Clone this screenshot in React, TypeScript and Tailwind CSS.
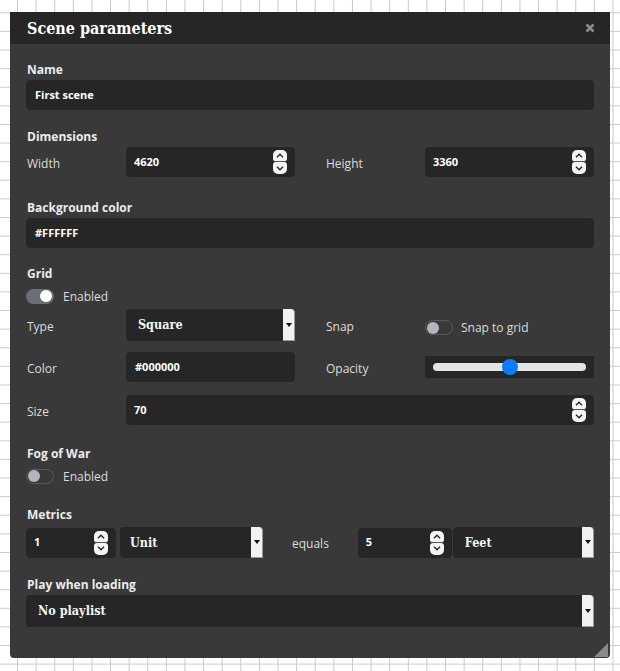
import React from "react";

function Spinner() {
  return (
    <div className="flex flex-col">
      <div className="w-[14px] h-[12px] bg-[#f4f4f4] rounded-t-[5px] rounded-b-[3px] flex items-center justify-center border-b border-[#555]">
        <svg width="8" height="5" viewBox="0 0 8 5">
          <path d="M1 4.2 L4 1.2 L7 4.2" stroke="#222" strokeWidth="1.3" fill="none" />
        </svg>
      </div>
      <div className="w-[14px] h-[12px] bg-[#f4f4f4] rounded-b-[5px] rounded-t-[3px] flex items-center justify-center">
        <svg width="8" height="5" viewBox="0 0 8 5">
          <path d="M1 0.8 L4 3.8 L7 0.8" stroke="#222" strokeWidth="1.3" fill="none" />
        </svg>
      </div>
    </div>
  );
}

function NumberInput({ value, className = "" }: { value: string; className?: string }) {
  return (
    <div className={`flex items-center h-[30px] bg-[#262626] rounded-[4px] pl-[8px] pr-[8px] ${className}`}>
      <span className="text-[11px] font-bold text-white font-['Open_Sans',sans-serif]">{value}</span>
      <div className="ml-auto">
        <Spinner />
      </div>
    </div>
  );
}

function TextInput({ value, className = "" }: { value: string; className?: string }) {
  return (
    <div className={`flex items-center h-[30px] bg-[#262626] rounded-[4px] pl-[9px] ${className}`}>
      <span className="text-[11px] font-bold text-white font-['Open_Sans',sans-serif]">{value}</span>
    </div>
  );
}

function Select({
  value,
  className = "",
  pl = "pl-[12px]",
}: {
  value: string;
  className?: string;
  pl?: string;
}) {
  return (
    <div className={`flex items-stretch bg-[#262626] rounded-[4px] ${className}`}>
      <span
        className={`flex-1 flex items-center ${pl} pt-[1px] text-[12.5px] font-bold text-[#f4f4f4] font-['DejaVu_Serif',serif] font-stretch-condensed`}
      >
        {value}
      </span>
      <div className="w-[12px] bg-[#f2f2f2] border-r border-b border-[#9a9a9a] rounded-tr-[4px] flex items-center justify-center">
        <svg width="6" height="4" viewBox="0 0 6 4">
          <path d="M0 0 H6 L3 4 Z" fill="#111" />
        </svg>
      </div>
    </div>
  );
}

function Toggle({ on }: { on: boolean }) {
  return on ? (
    <div className="w-[28px] h-[15px] rounded-full bg-[#6c6e77] flex items-center justify-end pr-[2px]">
      <div className="w-[12px] h-[12px] rounded-full bg-white" />
    </div>
  ) : (
    <div className="w-[28px] h-[15px] rounded-full border border-[#5a5a5a] flex items-center pl-[1px]">
      <div className="w-[12px] h-[12px] rounded-full bg-[#b3b6bc]" />
    </div>
  );
}

function SectionLabel({ children, className = "" }: { children: React.ReactNode; className?: string }) {
  return (
    <div
      className={`h-[18px] leading-[20px] text-[12px] font-bold text-[#ececec] font-['Open_Sans',sans-serif] pl-[1px] ${className}`}
    >
      {children}
    </div>
  );
}

function RowLabel({ children }: { children: React.ReactNode }) {
  return (
    <div className="w-[100px] shrink-0 pl-[1px] pt-[3px] text-[12px] text-[#dcdcdc] font-['Open_Sans',sans-serif]">
      {children}
    </div>
  );
}

export default function App() {
  return (
    <div className="w-full h-[671px] bg-white bg-[linear-gradient(to_right,#c8c8c8_1px,transparent_1px),linear-gradient(to_bottom,#cccccc_1px,transparent_1px)] bg-[size:18.62px_18.62px] bg-[position:17px_12.3px] pt-[12px] pl-[10px] overflow-hidden">
      <div className="w-[600px] h-[646px] bg-[#393939] rounded-b-[4px] flex flex-col relative">
        <div className="h-[32px] bg-[#262626] flex items-center pl-[17px] pr-[15px] shrink-0">
          <span className="pt-[1px] text-[16px] font-bold text-white font-['DejaVu_Serif',serif] font-stretch-condensed">
            Scene parameters
          </span>
          <svg className="ml-auto" width="10" height="10" viewBox="0 0 10 10">
            <path d="M1.5 1.5 L8.5 8.5 M8.5 1.5 L1.5 8.5" stroke="#8c8c8c" strokeWidth="2.6" strokeLinecap="butt" />
          </svg>
        </div>
        <div className="flex flex-col px-[16px] pt-[16px]">
          <SectionLabel>Name</SectionLabel>
          <TextInput value="First scene" className="mt-[2px]" />

          <SectionLabel className="mt-[17px]">Dimensions</SectionLabel>
          <div className="mt-[2px] flex gap-[30px]">
            <div className="flex-1 flex items-center">
              <RowLabel>Width</RowLabel>
              <NumberInput value="4620" className="flex-1" />
            </div>
            <div className="flex-1 flex items-center">
              <RowLabel>Height</RowLabel>
              <NumberInput value="3360" className="flex-1" />
            </div>
          </div>

          <SectionLabel className="mt-[21px]">Background color</SectionLabel>
          <TextInput value="#FFFFFF" className="mt-[2px]" />

          <SectionLabel className="mt-[16px]">Grid</SectionLabel>
          <div className="mt-[5px] h-[18px] flex items-center gap-[9px]">
            <Toggle on />
            <span className="pt-[1px] text-[12px] text-[#dcdcdc] font-['Open_Sans',sans-serif]">Enabled</span>
          </div>

          <div className="mt-[4px] flex gap-[30px]">
            <div className="flex-1 flex items-center">
              <RowLabel>Type</RowLabel>
              <Select value="Square" className="flex-1 h-[32px]" />
            </div>
            <div className="flex-1 flex items-center">
              <RowLabel>Snap</RowLabel>
              <div className="flex items-center gap-[8px] pt-[5px]">
                <Toggle on={false} />
                <span className="text-[12px] text-[#dcdcdc] font-['Open_Sans',sans-serif]">Snap to grid</span>
              </div>
            </div>
          </div>

          <div className="mt-[11px] flex gap-[30px]">
            <div className="flex-1 flex items-center">
              <RowLabel>Color</RowLabel>
              <TextInput value="#000000" className="flex-1" />
            </div>
            <div className="flex-1 flex items-center">
              <RowLabel>Opacity</RowLabel>
              <div className="flex-1 h-[22px] bg-[#262626] flex items-center px-[8px] relative">
                <div className="w-full h-[8px] rounded-full bg-[#e3e4e6]" />
                <div className="absolute left-[77px] top-[3px] w-[16px] h-[16px] rounded-full bg-[#0b7cff]" />
              </div>
            </div>
          </div>

          <div className="mt-[13px] flex items-center">
            <RowLabel>Size</RowLabel>
            <NumberInput value="70" className="flex-1" />
          </div>

          <SectionLabel className="mt-[19px]">Fog of War</SectionLabel>
          <div className="mt-[5px] h-[18px] flex items-center gap-[9px]">
            <Toggle on={false} />
            <span className="pt-[1px] text-[12px] text-[#dcdcdc] font-['Open_Sans',sans-serif]">Enabled</span>
          </div>

          <SectionLabel className="mt-[20px]">Metrics</SectionLabel>
          <div className="mt-[4px] flex items-center">
            <NumberInput value="1" className="w-[90px]" />
            <Select value="Unit" className="w-[143px] h-[31px] ml-[4px]" pl="pl-[10px]" />
            <span className="ml-[29px] pt-[2px] text-[12px] text-[#dcdcdc] font-['Open_Sans',sans-serif]">equals</span>
            <NumberInput value="5" className="w-[94px] ml-[29px]" />
            <Select value="Feet" className="flex-1 h-[31px] ml-[1px]" />
          </div>

          <SectionLabel className="mt-[17px]">Play when loading</SectionLabel>
          <Select value="No playlist" className="mt-[2px] h-[32px]" />
        </div>
        <svg className="absolute right-[2px] bottom-[1px]" width="14" height="14" viewBox="0 0 14 14">
          <path d="M14 0 L14 14 L0 14 Z" fill="#8a8a8a" />
        </svg>
      </div>
    </div>
  );
}
